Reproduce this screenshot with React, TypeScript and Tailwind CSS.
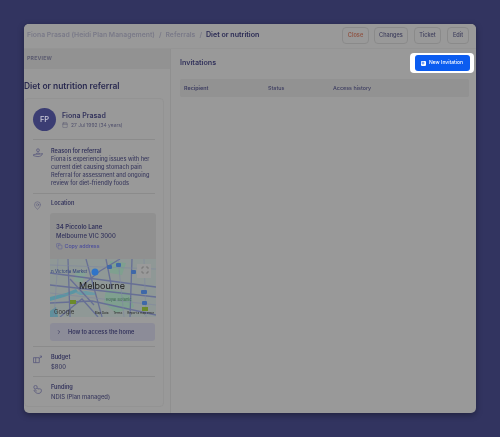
import { ChevronRight, Copy, MapPin, Maximize, Calendar, Plus } from 'lucide-react';

const PersonHandIcon = () => (
  <svg viewBox="0 0 10 10" className="mt-[1px] h-[10px] w-[10px]" fill="none" stroke="currentColor" strokeWidth="0.7">
    <circle cx="5" cy="2.2" r="1.4" />
    <path d="M3.2 6 C3.4 4.6 6.6 4.6 6.8 6" />
    <path d="M0.5 6.6 L3 6.2 L6 6.2 L9.6 5.6 C9 7.6 7 8.6 5 8.6 C3.4 8.6 2 8 0.5 7.6 Z" />
  </svg>
);

const BudgetIcon = () => (
  <svg viewBox="0 0 10 10" className="mt-[2px] h-[9px] w-[9px]" fill="none" stroke="currentColor" strokeWidth="0.8">
    <path d="M0.5 3 H7 V8.5 H0.5 Z" />
    <path d="M3 3 V8.5" />
    <path d="M7 4 L9.5 1.5" />
    <path d="M7.5 1.2 L9.6 1.2 L9.6 3" />
  </svg>
);

const FundingIcon = () => (
  <svg viewBox="0 0 10 10" className="mt-[2px] h-[9px] w-[9px]" fill="none" stroke="currentColor" strokeWidth="0.8">
    <circle cx="2.8" cy="2.4" r="1.9" />
    <path d="M4.6 4.4 C5.4 3.2 6.4 4 6.2 4.6 C7.2 3.8 8.6 4.2 9.2 5.2 C9.8 6.8 8.8 9.2 6.6 9.4 C4.6 9.6 2.6 8.6 1.4 6.4 C1 5.4 2.2 5 3 5.8 L4.2 6.8" />
  </svg>
);

const MapPreview = () => (
  <div className="relative h-[58px] w-[106px] overflow-hidden bg-[#8b9a93]">
    <svg viewBox="0 0 106 58" className="block h-[58px] w-[106px]" fill="none">
      <rect width="106" height="58" fill="#8f9896" />
      {/* parks and water */}
      <path d="M56 30 L80 34 L84 48 L66 54 L54 44 Z" fill="#7fa08f" />
      <path d="M60 2 L76 4 L72 16 L60 14 Z" fill="#7fa08f" />
      <path d="M26 12 L36 14 L32 24 L24 22 Z" fill="#85a294" />
      <path d="M0 38 L16 34 L26 30 L28 33 L14 38 L0 42 Z" fill="#5a95a3" />
      <path d="M24 33 L36 32 L46 34 L46 36 L30 36 Z" fill="#6a9aa5" />
      <path d="M0 52 L6 48 L8 58 L0 58 Z" fill="#5f8f9c" />
      {/* roads */}
      <g stroke="#676f95" strokeWidth="1.3">
        <path d="M0 14 L106 28" />
        <path d="M0 26 L106 38" />
        <path d="M18 0 L20 58" />
        <path d="M36 0 L52 58" />
        <path d="M82 0 L80 58" />
        <path d="M56 0 L62 30" />
        <path d="M0 44 L42 42 L106 56" />
        <path d="M10 58 L32 40 L48 58" />
        <path d="M28 30 L50 12 L70 0" />
        <path d="M20 20 L44 46" />
      </g>
      <g stroke="#7f87a0" strokeWidth="0.6">
        <path d="M0 6 L106 10" />
        <path d="M0 34 L106 46" />
        <path d="M8 0 L4 58" />
        <path d="M68 0 L74 58" />
        <path d="M94 0 L96 58" />
      </g>
      {/* shields and pins */}
      <g fill="#3f68a8">
        <rect x="57" y="6" width="5" height="4" rx="1" />
        <rect x="66" y="4" width="5" height="4" rx="1" />
        <rect x="81" y="11" width="5" height="4" rx="1" />
        <rect x="91" y="31" width="6" height="4" rx="1" />
        <rect x="92" y="42" width="5" height="4" rx="1" />
      </g>
      <g fill="#6c8a2a">
        <rect x="20" y="41" width="6" height="4" />
        <rect x="92" y="48" width="6" height="4" />
      </g>
      <circle cx="45" cy="13" r="3.5" fill="#2f74c8" />
      <rect x="87" y="5" width="14" height="14" fill="#9a9a9a" />
    </svg>
    <Maximize className="absolute right-[7px] top-[7px] h-[8px] w-[8px] text-[#555]" strokeWidth={1.5} />
    <span className="absolute left-[29px] top-[21px] text-[9px] leading-[12px] text-[#1c1c1c]">Melbourne</span>
    <span className="absolute left-[1px] top-[10px] text-[4.5px] leading-[6px] text-[#2d3f7a]">n Victoria Market</span>
    <span className="absolute left-[56px] top-[38px] text-[4px] leading-[5px] text-[#3f6a4f]">Royal Botanic</span>
    <span className="absolute left-[4px] bottom-[1px] text-[6px] leading-[8px] text-[#333]">Google</span>
    <div className="absolute bottom-[1px] right-[2px] flex gap-[5px] text-[3px] leading-[5px] text-[#222]">
      <span>Map Data</span>
      <span>Terms</span>
      <span>Report a map error</span>
    </div>
  </div>
);

const Section = ({ icon, children }: { icon: React.ReactNode; children: React.ReactNode }) => (
  <div className="flex gap-[6px]">
    <div className="w-[12px] shrink-0 text-[#52527a]">{icon}</div>
    <div className="min-w-0 flex-1">{children}</div>
  </div>
);

export default function App() {
  return (
    <div className="h-[437px] w-[500px] overflow-hidden bg-[#323460] pl-[24px] pr-[24px] pt-[24px] font-['Inter',sans-serif] text-[#33335c] blur-[0.3px]">
      <div className="flex h-[389px] w-[452px] flex-col overflow-hidden rounded-[5px] bg-[#999999] shadow-[0_2px_6px_rgba(0,0,0,0.35)]">
        {/* top bar */}
        <div className="flex h-[24px] shrink-0 items-center justify-between bg-[#999999] pb-[2px] pl-[3px] pr-[7px]">
          <div className="flex items-center gap-[4px] text-[6.85px] font-semibold leading-none text-[#7a7a88]">
            <span>Fiona Prasad (Heidi Plan Management)</span>
            <span>/</span>
            <span>Referrals</span>
            <span>/</span>
            <span className="text-[7.1px] font-semibold text-[#2a2a54]">Diet or nutrition</span>
          </div>
          <div className="flex items-center text-[5.6px] font-medium">
            <button className="mr-[5px] h-[17px] w-[27px] rounded-[4px] border border-[#8a8a8a] font-semibold text-[#8f5444]">Close</button>
            <button className="mr-[6px] h-[17px] w-[34px] rounded-[4px] border border-[#8a8a8a] text-[#3d3d5c]">Changes</button>
            <button className="mr-[6px] h-[17px] w-[27px] rounded-[4px] border border-[#8a8a8a] text-[#3d3d5c]">Ticket</button>
            <button className="h-[17px] w-[22px] rounded-[4px] border border-[#8a8a8a] text-[#3d3d5c]">Edit</button>
          </div>
        </div>

        <div className="flex min-h-0 flex-1 border-t border-[#949494]">
          {/* sidebar */}
          <div className="flex w-[147px] shrink-0 flex-col border-r border-[#8f8f8f]">
            <div className="flex h-[20px] shrink-0 items-center bg-[#929292] pl-[3px] text-[5.2px] font-bold tracking-[0.2px] text-[#5c5c70]">PREVIEW</div>
            <h1 className="mt-[11px] text-[8.45px] font-semibold leading-[12px] text-[#2a2a50]">Diet or nutrition referral</h1>
            <div className="mt-[6px] w-[140px] rounded-[4px] border border-[#939393] px-[8px] pb-[5px] pt-[9px]">
              <div className="flex items-center gap-[6px] border-b border-[#8b8b8b] pb-[8px]">
                <div className="flex h-[23px] w-[23px] items-center justify-center rounded-full bg-[#3b3d73] text-[7.5px] font-medium text-[#c9c9d8]">FP</div>
                <div>
                  <div className="text-[7px] font-semibold leading-[10px] text-[#33335c]">Fiona Prasad</div>
                  <div className="mt-[1px] flex items-center gap-[3px] text-[4.9px] leading-[7px] text-[#50506c]">
                    <Calendar className="h-[6px] w-[6px]" strokeWidth={1.5} />
                    <span>27 Jul 1992 (34 years)</span>
                  </div>
                </div>
              </div>

              <div className="border-b border-[#8b8b8b] pb-[6px] pt-[7px]">
                <Section icon={<PersonHandIcon />}>
                  <div className="text-[5.6px] font-semibold leading-[8.1px] text-[#33335c]">Reason for referral</div>
                  <div className="text-[5.6px] font-medium leading-[8.1px] text-[#3c3c60]">
                    Fiona is experiencing issues with her<br />
                    current diet causing stomach pain<br />
                    Referral for assessment and ongoing<br />
                    review for diet-friendly foods
                  </div>
                </Section>
              </div>

              <div className="border-b border-[#8b8b8b] pb-[5px] pt-[5px]">
                <Section icon={<MapPin className="mt-[2px] h-[9px] w-[9px]" strokeWidth={1.2} />}>
                  <div className="text-[5.6px] font-semibold leading-[8px] text-[#33335c]">Location</div>
                  <div className="-ml-[1px] mt-[6px] w-[106px] rounded-t-[3px] bg-[#909090] pt-[10px]">
                    <div className="pl-[6px] text-[6px] leading-[8.5px] text-[#33335c]">
                      <div className="font-semibold">34 Piccolo Lane</div>
                      <div className="font-medium">Melbourne VIC 3000</div>
                    </div>
                    <div className="mb-[9px] mt-[2px] flex items-center gap-[2px] pl-[6px] text-[5.3px] font-medium leading-[8px] text-[#4a4c9c]">
                      <Copy className="h-[6.5px] w-[6.5px]" strokeWidth={1.4} />
                      <span>Copy address</span>
                    </div>
                    <MapPreview />
                  </div>
                  <div className="-ml-[1px] mt-[6px] flex h-[18px] w-[105px] items-center gap-[6px] rounded-[3px] bg-[#8c8c98] pl-[6px] text-[5.6px] font-semibold text-[#33335c]">
                    <ChevronRight className="h-[6px] w-[6px]" strokeWidth={2.5} />
                    <span>How to access the home</span>
                  </div>
                </Section>
              </div>

              <div className="border-b border-[#8b8b8b] pb-[5px] pt-[6px]">
                <Section icon={<BudgetIcon />}>
                  <div className="text-[5.6px] font-semibold leading-[9px] text-[#33335c]">Budget</div>
                  <div className="text-[5.8px] font-medium leading-[9px] text-[#3c3c60]">$800</div>
                </Section>
              </div>

              <div className="pt-[6px]">
                <Section icon={<FundingIcon />}>
                  <div className="text-[5.6px] font-semibold leading-[9px] text-[#33335c]">Funding</div>
                  <div className="text-[5.8px] font-medium leading-[9px] text-[#3c3c60]">NDIS (Plan managed)</div>
                </Section>
              </div>
            </div>
          </div>

          {/* invitations */}
          <div className="min-w-0 flex-1 pl-[9px] pr-[2px]">
            <div className="flex h-[28px] items-center justify-between">
              <h2 className="text-[7.2px] font-semibold text-[#33335c]">Invitations</h2>
              <div className="rounded-[4px] bg-white px-[4.5px] py-[2px]">
                <button className="flex h-[16.5px] w-[55px] items-center justify-center gap-[3px] rounded-[3px] bg-[#0b5cf0] text-[5px] font-medium text-white">
                  <span className="flex h-[5px] w-[5px] items-center justify-center rounded-[1px] bg-white">
                    <Plus className="h-[4px] w-[4px] text-[#0b5cf0]" strokeWidth={4} />
                  </span>
                  New Invitation
                </button>
              </div>
            </div>
            <div className="mr-[5px] mt-[2px] flex h-[18px] items-center rounded-[2px] bg-[#929292] pl-[4px] text-[5.4px] font-medium text-[#3c3c60]">
              <span className="w-[84px] font-semibold">Recipient</span>
              <span className="w-[65px]">Status</span>
              <span>Access history</span>
            </div>
          </div>
        </div>
      </div>
    </div>
  );
}
